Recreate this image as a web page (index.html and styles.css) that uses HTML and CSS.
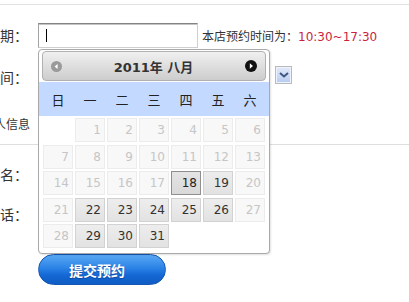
FILE: index.html
```html
<!DOCTYPE html>
<html lang="zh-CN">
<head>
  <meta charset="UTF-8" />
  <meta name="viewport" content="width=device-width, initial-scale=1.0"/>
  <title>在线预约</title>
  <link rel="stylesheet" href="styles.css">
</head>
<body>

  <div class="topline"></div>

  <form class="booking">
    <div class="row row-date">
      <label class="label">预约日期<span class="colon">：</span></label>
      <div class="field-wrap">
        <div class="field"><span class="caret"></span></div>

        <div class="calendar">
          <div class="cal-head">
            <svg class="nav" width="11" height="11" viewBox="0 0 11 11">
              <circle cx="5.5" cy="5.5" r="5.5" fill="#9a9a9a"/>
              <path d="M6.6 3 L3.6 5.5 L6.6 8 Z" fill="#fff"/>
            </svg>
            <span class="cal-title">2011年 八月</span>
            <svg class="nav" width="12" height="12" viewBox="0 0 12 12">
              <circle cx="6" cy="6" r="6" fill="#111"/>
              <path d="M4.8 3.2 L8 6 L4.8 8.8 Z" fill="#fff"/>
            </svg>
          </div>

          <div class="cal-week">
            <span>日</span><span>一</span><span>二</span><span>三</span><span>四</span><span>五</span><span>六</span>
          </div>

          <div class="cal-days">
            <span class="day empty"></span>
            <span class="day off">1</span>
            <span class="day off">2</span>
            <span class="day off">3</span>
            <span class="day off">4</span>
            <span class="day off">5</span>
            <span class="day off">6</span>

            <span class="day off">7</span>
            <span class="day off">8</span>
            <span class="day off">9</span>
            <span class="day off">10</span>
            <span class="day off">11</span>
            <span class="day off">12</span>
            <span class="day off">13</span>

            <span class="day off">14</span>
            <span class="day off">15</span>
            <span class="day off">16</span>
            <span class="day off">17</span>
            <span class="day today">18</span>
            <span class="day">19</span>
            <span class="day off">20</span>

            <span class="day off">21</span>
            <span class="day">22</span>
            <span class="day">23</span>
            <span class="day">24</span>
            <span class="day">25</span>
            <span class="day">26</span>
            <span class="day off">27</span>

            <span class="day off">28</span>
            <span class="day">29</span>
            <span class="day">30</span>
            <span class="day">31</span>
          </div>
        </div>
      </div>
      <span class="hint">本店预约时间为<span class="colon">：</span><em>10:30~17:30</em></span>
    </div>

    <div class="row row-time">
      <label class="label">预约时间<span class="colon">：</span></label>
      <div class="select">
        <span class="select-arrow">
          <svg width="10" height="6" viewBox="0 0 10 6">
            <path d="M1 1 L5 4.5 L9 1" fill="none" stroke="#3f5680" stroke-width="2"/>
          </svg>
        </span>
      </div>
    </div>

    <div class="section">个人信息</div>

    <div class="row row-name">
      <label class="label">姓名<span class="colon">：</span></label>
      <div class="field"></div>
    </div>

    <div class="row row-phone">
      <label class="label">电话<span class="colon">：</span></label>
      <div class="field"></div>
    </div>

    <div class="actions">
      <button type="button" class="submit">提交预约</button>
    </div>
  </form>

</body>
</html>
```

FILE: styles.css
```css
body {
  margin: 0;
  font-family: "DejaVu Sans", "Noto Sans CJK SC", sans-serif;
  font-size: 12px;
  color: #333;
  background: #fff;
  overflow: hidden;
}

.topline {
  height: 4px;
  border-bottom: 1px solid #e2e2e2;
}

.booking {
  margin-left: -52px;
}

.row {
  display: flex;
  align-items: center;
  height: 25px;
}

.label {
  width: 80px;
  margin-right: 10px;
  text-align: right;
  font-family: "Noto Sans CJK SC", sans-serif;
  font-size: 14px;
  line-height: 25px;
  color: #333;
  flex-shrink: 0;
}

/* full-width colon, kept at one em and centred */
.colon {
  display: inline-block;
  width: 1em;
  text-align: center;
}

.row-date {
  margin-top: 18px;
}

.row-time {
  margin-top: 17px;
  height: 20px;
  align-items: flex-start;
}

.row-name {
  margin-top: 17px;
}

.row-phone {
  margin-top: 15px;
}

.field-wrap {
  position: relative;
}

.field {
  width: 160px;
  height: 25px;
  box-sizing: border-box;
  border: 1px solid #cfcfcf;
  border-top-color: #848484;
  border-left-color: #a3a3a3;
  box-shadow: inset 0 1px 0 #c4c4c4;
  background: #fff;
  position: relative;
}

.caret {
  position: absolute;
  left: 7px;
  top: 5px;
  width: 1px;
  height: 13px;
  background: #000;
}

.hint {
  margin-left: 4px;
  font-family: "Noto Sans CJK SC", sans-serif;
  font-size: 12px;
  color: #333;
}

.hint em {
  font-style: normal;
  font-family: "DejaVu Sans", sans-serif;
  color: #cc1f3f;
}

.select {
  width: 254px;
  height: 18px;
  margin-top: 1px;
  display: flex;
  justify-content: flex-end;
}

.select-arrow {
  width: 17px;
  height: 18px;
  box-sizing: border-box;
  border: 1px solid #b9b9b9;
  background: linear-gradient(#e2eafa, #b7cbf0);
  box-shadow: inset 0 0 0 1px #eef3fd;
  display: flex;
  align-items: center;
  justify-content: center;
}

.section {
  margin-top: 19px;
  padding: 10px 0 10px 34px;
  line-height: 20px;
  font-family: "Noto Sans CJK SC", sans-serif;
  font-size: 12px;
  color: #333;
  border-bottom: 1px solid #dedede;
}

.actions {
  margin-top: 27px;
  padding-left: 90px;
}

.submit {
  width: 128px;
  height: 31px;
  padding: 0 10px 0 0;
  border: 1px solid #1458b4;
  border-radius: 16px;
  background: linear-gradient(#5aa8f3 0%, #2a83e6 45%, #1467d4 70%, #0f5cc4 100%);
  color: #fff;
  font-family: "Noto Sans CJK SC", sans-serif;
  font-size: 14px;
  font-weight: bold;
  text-shadow: 0 1px 1px rgba(0, 40, 110, 0.5);
  cursor: pointer;
}

/* calendar popup */

.calendar {
  position: absolute;
  left: 0;
  top: 26px;
  width: 232px;
  box-sizing: border-box;
  border: 1px solid #a9a9a9;
  border-radius: 4px;
  background: #fff;
  box-shadow: 1px 1px 2px rgba(0, 0, 0, 0.12);
  padding: 1px 0 5px;
  z-index: 5;
}

.cal-head {
  margin: 0 3px;
  height: 30px;
  box-sizing: border-box;
  border: 1px solid #b1b1b1;
  border-radius: 4px;
  background: linear-gradient(#f0f0f0, #cdcdcd);
  display: flex;
  align-items: center;
  justify-content: space-between;
  padding: 0 8px 0 8px;
}

.cal-title {
  font-size: 13px;
  font-weight: bold;
  color: #333;
}

.nav {
  display: block;
}

.cal-week {
  margin-top: 1px;
  height: 34px;
  background: #c3d9ff;
  display: grid;
  grid-template-columns: repeat(7, 30px);
  column-gap: 2px;
  padding-left: 4px;
  align-items: center;
}

.cal-week span {
  text-align: center;
  font-family: "Noto Sans CJK SC", sans-serif;
  font-size: 13px;
  color: #222;
}

.cal-days {
  margin-top: 2px;
  padding-left: 4px;
  display: grid;
  grid-template-columns: repeat(7, 30px);
  grid-auto-rows: 24px;
  column-gap: 2px;
  row-gap: 2.5px;
}

.day {
  box-sizing: border-box;
  border: 1px solid #d2d2d2;
  background: linear-gradient(#ededed, #e2e2e2);
  color: #333;
  font-size: 12px;
  text-align: right;
  padding-right: 3px;
  line-height: 22px;
}

.day.off {
  border-color: #ececec;
  background: #f8f8f8;
  color: #c6c6c6;
}

.day.today {
  border-color: #8f8f8f;
  background: linear-gradient(#e4e4e4, #d9d9d9);
  color: #222;
}

.day.empty {
  border: none;
  background: none;
}
```
